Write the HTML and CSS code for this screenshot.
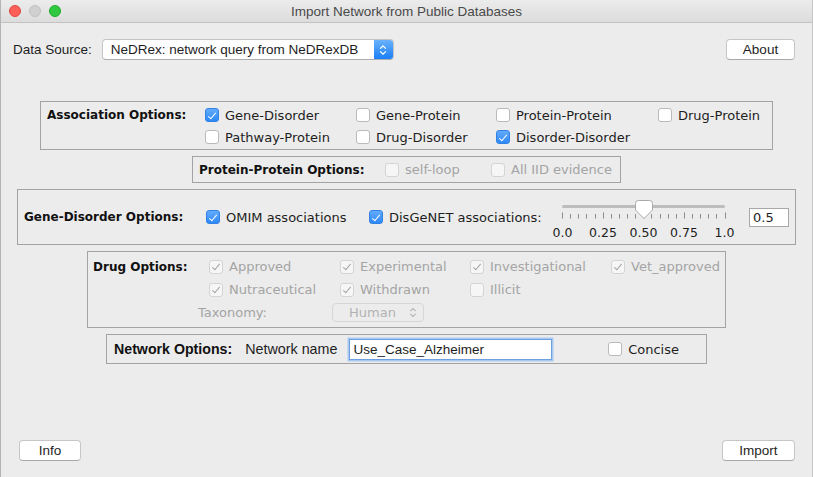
FILE: index.html
```html
<!DOCTYPE html>
<html lang="en">

<head>
    <meta charset="UTF-8">
    <meta name="viewport" content="width=device-width, initial-scale=1.0">
    <title>Import Network from Public Databases</title>
    <link rel="stylesheet" href="styles.css">
</head>

<body>
    <div class="window">
        <div class="titlebar">
            <div class="lights">
                <span class="light red"></span>
                <span class="light grey"></span>
                <span class="light green"></span>
            </div>
            <div class="title">Import Network from Public Databases</div>
            <div></div>
        </div>

        <div class="content">
            <div class="source-row">
                <span class="hn">Data Source:</span>
                <div class="popup">
                    <span class="popup-text">NeDRex: network query from NeDRexDB</span>
                    <span class="stepper">
                        <svg width="8" height="12" viewBox="0 0 8 12">
                            <path d="M1.2 4.6 L4 1.8 L6.8 4.6 M1.2 7.4 L4 10.2 L6.8 7.4" fill="none" stroke="#fff" stroke-width="1.3" />
                        </svg>
                    </span>
                </div>
                <button class="btn about">About</button>
            </div>

            <div class="panels">
                <div class="panel assoc">
                    <span class="panel-title">Association Options:</span>
                    <label class="opt"><span class="cb on"></span>Gene-Disorder</label>
                    <label class="opt"><span class="cb"></span>Gene-Protein</label>
                    <label class="opt"><span class="cb"></span>Protein-Protein</label>
                    <label class="opt"><span class="cb"></span>Drug-Protein</label>
                    <label class="opt second"><span class="cb"></span>Pathway-Protein</label>
                    <label class="opt"><span class="cb"></span>Drug-Disorder</label>
                    <label class="opt"><span class="cb on"></span>Disorder-Disorder</label>
                </div>

                <div class="panel ppi">
                    <span class="panel-title ppi-title">Protein-Protein Options:</span>
                    <label class="opt off selfloop"><span class="cb"></span>self-loop</label>
                    <label class="opt off"><span class="cb"></span>All IID evidence</label>
                </div>

                <div class="panel gene">
                    <span class="panel-title gene-title">Gene-Disorder Options:</span>
                    <label class="opt omim"><span class="cb on"></span>OMIM associations</label>
                    <label class="opt disgenet"><span class="cb on"></span>DisGeNET associations:</label>
                    <svg class="slider" width="190" height="46" viewBox="0 0 190 46">
                        <rect x="12" y="11" width="163" height="3" rx="1.5" fill="#bdbdbd" />
                        <g id="ticks" stroke="#8c8c8c" stroke-width="1"></g>
                        <g class="slider-labels" font-family="DejaVu Sans, sans-serif" font-size="12.5" fill="#1e1e1e" text-anchor="middle">
                            <text x="12.5" y="43">0.0</text>
                            <text x="53" y="43">0.25</text>
                            <text x="93.5" y="43">0.50</text>
                            <text x="134" y="43">0.75</text>
                            <text x="174.5" y="43">1.0</text>
                        </g>
                        <path d="M85.5 9.5 Q85.5 6.5 88.5 6.5 H99.5 Q102.5 6.5 102.5 9.5 V16 L94 24.5 L85.5 16 Z" fill="#fff" stroke="#a9a9a9" stroke-width="1" />
                    </svg>
                    <input class="field small" type="text" value="0.5">
                </div>

                <div class="panel drug">
                    <span class="panel-title">Drug Options:</span>
                    <label class="opt off"><span class="cb on"></span>Approved</label>
                    <label class="opt off"><span class="cb on"></span>Experimental</label>
                    <label class="opt off"><span class="cb on"></span>Investigational</label>
                    <label class="opt off"><span class="cb on"></span>Vet_approved</label>
                    <label class="opt off second"><span class="cb on"></span>Nutraceutical</label>
                    <label class="opt off"><span class="cb on"></span>Withdrawn</label>
                    <label class="opt off"><span class="cb"></span>Illicit</label>
                    <div class="taxonomy">
                        <span class="tax-label">Taxonomy:</span>
                        <div class="tax-select">
                            <span>Human</span>
                            <svg width="8" height="11" viewBox="0 0 8 11">
                                <path d="M1.3 4.2 L4 1.6 L6.7 4.2 M1.3 6.8 L4 9.4 L6.7 6.8" fill="none" stroke="#b5b5b5" stroke-width="1.1" />
                            </svg>
                        </div>
                    </div>
                </div>

                <div class="panel network">
                    <span class="net-title">Network Options:</span>
                    <span class="hn net-name">Network name</span>
                    <input class="field focus" type="text" value="Use_Case_Alzheimer">
                    <label class="opt concise"><span class="cb"></span>Concise</label>
                </div>
            </div>

            <div class="bottom-row">
                <button class="btn info">Info</button>
                <button class="btn import">Import</button>
            </div>
        </div>
    </div>
    <script>
        // slider ticks: 0.0 to 1.0 step 0.05, major every 0.25
        const ticks = document.getElementById('ticks');
        for (let i = 0; i <= 20; i++) {
            const x = Math.round(12 + i * 8.13) + 0.5;
            const major = i % 5 === 0;
            const line = document.createElementNS('http://www.w3.org/2000/svg', 'line');
            line.setAttribute('x1', x);
            line.setAttribute('x2', x);
            line.setAttribute('y1', major ? 18.5 : 20);
            line.setAttribute('y2', 24.5);
            ticks.appendChild(line);
        }
    </script>
</body>

</html>
```

FILE: styles.css
```css
body {
    margin: 0;
    background-color: #ffffff;
    font-family: "DejaVu Sans", sans-serif;
}

.window {
    width: 813px;
    height: 477px;
    box-sizing: border-box;
    background-color: #ececec;
    border-left: 1px solid #b4b4b4;
    border-right: 1px solid #c6c6c6;
    display: flex;
    flex-direction: column;
}

.titlebar {
    height: 22px;
    display: grid;
    grid-template-columns: 1fr auto 1fr;
    align-items: center;
    background: linear-gradient(#ececec, #dcdcdc);
    border-bottom: 1px solid #c2c2c2;
}

.lights {
    display: flex;
    gap: 8px;
    padding-left: 8px;
}

.light {
    width: 12px;
    height: 12px;
    box-sizing: border-box;
    border-radius: 50%;
}

.red {
    background-color: #fc5f57;
    border: 1px solid #e2463f;
}

.grey {
    background-color: #d0d0d0;
    border: 1px solid #c1c1c1;
}

.green {
    background-color: #2fc840;
    border: 1px solid #1fad2c;
}

.title {
    font-family: "Liberation Sans", Arial, sans-serif;
    font-size: 13.5px;
    color: #4a4a4a;
}

.content {
    flex: 1;
    display: flex;
    flex-direction: column;
}

.hn {
    font-family: "Liberation Sans", Arial, sans-serif;
    font-size: 13.5px;
    color: #1e1e1e;
}

.source-row {
    display: flex;
    align-items: center;
    height: 21px;
    margin-top: 16px;
    padding: 0 17px 0 12px;
}

.popup {
    margin-left: 10px;
    width: 292px;
    height: 21px;
    box-sizing: border-box;
    display: flex;
    align-items: center;
    background-color: #ffffff;
    border: 1px solid #c4c4c4;
    border-bottom-color: #adadad;
    border-radius: 4px;
    overflow: hidden;
}

.popup-text {
    flex: 1;
    padding-left: 8px;
    font-family: "Liberation Sans", Arial, sans-serif;
    font-size: 13.5px;
    color: #1e1e1e;
}

.stepper {
    width: 19px;
    height: 100%;
    display: flex;
    align-items: center;
    justify-content: center;
    background: linear-gradient(#69b1fb, #1a7ff6);
}

.btn {
    height: 21px;
    box-sizing: border-box;
    padding: 0;
    background-color: #ffffff;
    border: 1px solid #c6c6c6;
    border-bottom-color: #a9a9a9;
    border-radius: 4px;
    font-family: "Liberation Sans", Arial, sans-serif;
    font-size: 13.5px;
    color: #1e1e1e;
}

.about {
    margin-left: auto;
    width: 69px;
}

.panels {
    margin-top: 41px;
    display: flex;
    flex-direction: column;
    align-items: center;
    gap: 6px;
}

.panel {
    box-sizing: border-box;
    border: 1px solid #a3a3a3;
}

.panel-title {
    font-weight: bold;
    font-size: 12px;
    color: #111111;
    white-space: nowrap;
}

.opt {
    display: flex;
    align-items: center;
    font-size: 13px;
    color: #1e1e1e;
    white-space: nowrap;
}

.opt.off {
    color: #a4a4a4;
}

.cb {
    position: relative;
    flex: none;
    width: 14px;
    height: 14px;
    box-sizing: border-box;
    margin-right: 6px;
    background-color: #ffffff;
    border: 1px solid #bababa;
    border-radius: 3px;
}

.cb.on {
    background: linear-gradient(#62abfc, #2d88f6);
    border-color: #3282e6;
}

.cb.on::after {
    content: "";
    position: absolute;
    left: 4px;
    top: 1.5px;
    width: 3px;
    height: 7px;
    border: solid #ffffff;
    border-width: 0 1.5px 1.5px 0;
    transform: rotate(40deg);
}

.off .cb,
.off .cb.on {
    background: #f6f6f6;
    border-color: #d4d4d4;
}

.off .cb.on::after {
    border-color: #a3a3a3;
}

/* association */
.assoc {
    width: 733px;
    height: 49px;
    padding: 2px 0 1px 6px;
    display: grid;
    grid-template-columns: 158px 151px 140px 162px 1fr;
    grid-auto-rows: 22px;
    align-items: center;
}

.second {
    grid-column: 2;
}

/* protein-protein */
.ppi {
    width: 429px;
    height: 27px;
    padding-left: 6px;
    display: flex;
    align-items: center;
}

.ppi-title {
    width: 186px;
}

.selfloop {
    width: 106px;
}

/* gene-disorder */
.gene {
    width: 779px;
    height: 56px;
    padding-left: 6px;
    display: flex;
    align-items: center;
}

.gene-title {
    width: 182px;
}

.omim {
    width: 163px;
}

.disgenet {
    width: 181px;
}

.slider {
    flex: none;
}

.field {
    box-sizing: border-box;
    background-color: #ffffff;
    border: 1px solid #a8a8a8;
    border-radius: 0;
    outline: none;
}

.field.small {
    margin-left: 9px;
    width: 40px;
    height: 19px;
    padding: 0 3px;
    font-family: "DejaVu Sans", sans-serif;
    font-size: 13px;
    color: #1e1e1e;
}

/* drug */
.drug {
    width: 639px;
    height: 77px;
    padding: 3px 0 3px 5px;
    display: grid;
    grid-template-columns: 116px 131px 130px 141px 1fr;
    grid-auto-rows: 23px;
    align-items: center;
}

.taxonomy {
    grid-column: 1 / -1;
    display: flex;
    align-items: center;
    padding-left: 105px;
}

.tax-label {
    width: 134px;
    font-size: 13px;
    color: #a4a4a4;
}

.tax-select {
    width: 92px;
    height: 19px;
    box-sizing: border-box;
    display: flex;
    align-items: center;
    justify-content: space-between;
    padding: 0 6px 0 16px;
    border: 1px solid #d6d6d6;
    border-radius: 4px;
    font-size: 13px;
    color: #b2b2b2;
}

/* network */
.network {
    width: 601px;
    height: 30px;
    padding: 0 27px 0 7px;
    display: flex;
    align-items: center;
}

.net-title {
    font-family: "Liberation Sans", Arial, sans-serif;
    font-weight: bold;
    font-size: 14.2px;
    color: #111111;
}

.net-name {
    margin-left: 13px;
    font-size: 14.3px;
}

.field.focus {
    margin-left: 12px;
    width: 203px;
    height: 21px;
    padding: 0 3px;
    border: 1px solid #6e9fe0;
    box-shadow: 0 0 0 1.5px #a9c8f2;
    font-family: "Liberation Sans", Arial, sans-serif;
    font-size: 13.5px;
    color: #1e1e1e;
}

.concise {
    margin-left: auto;
}

.bottom-row {
    margin-top: auto;
    margin-bottom: 16px;
    display: flex;
    justify-content: space-between;
    padding: 0 17px 0 18px;
}

.info {
    width: 62px;
}

.import {
    width: 73px;
}
```
